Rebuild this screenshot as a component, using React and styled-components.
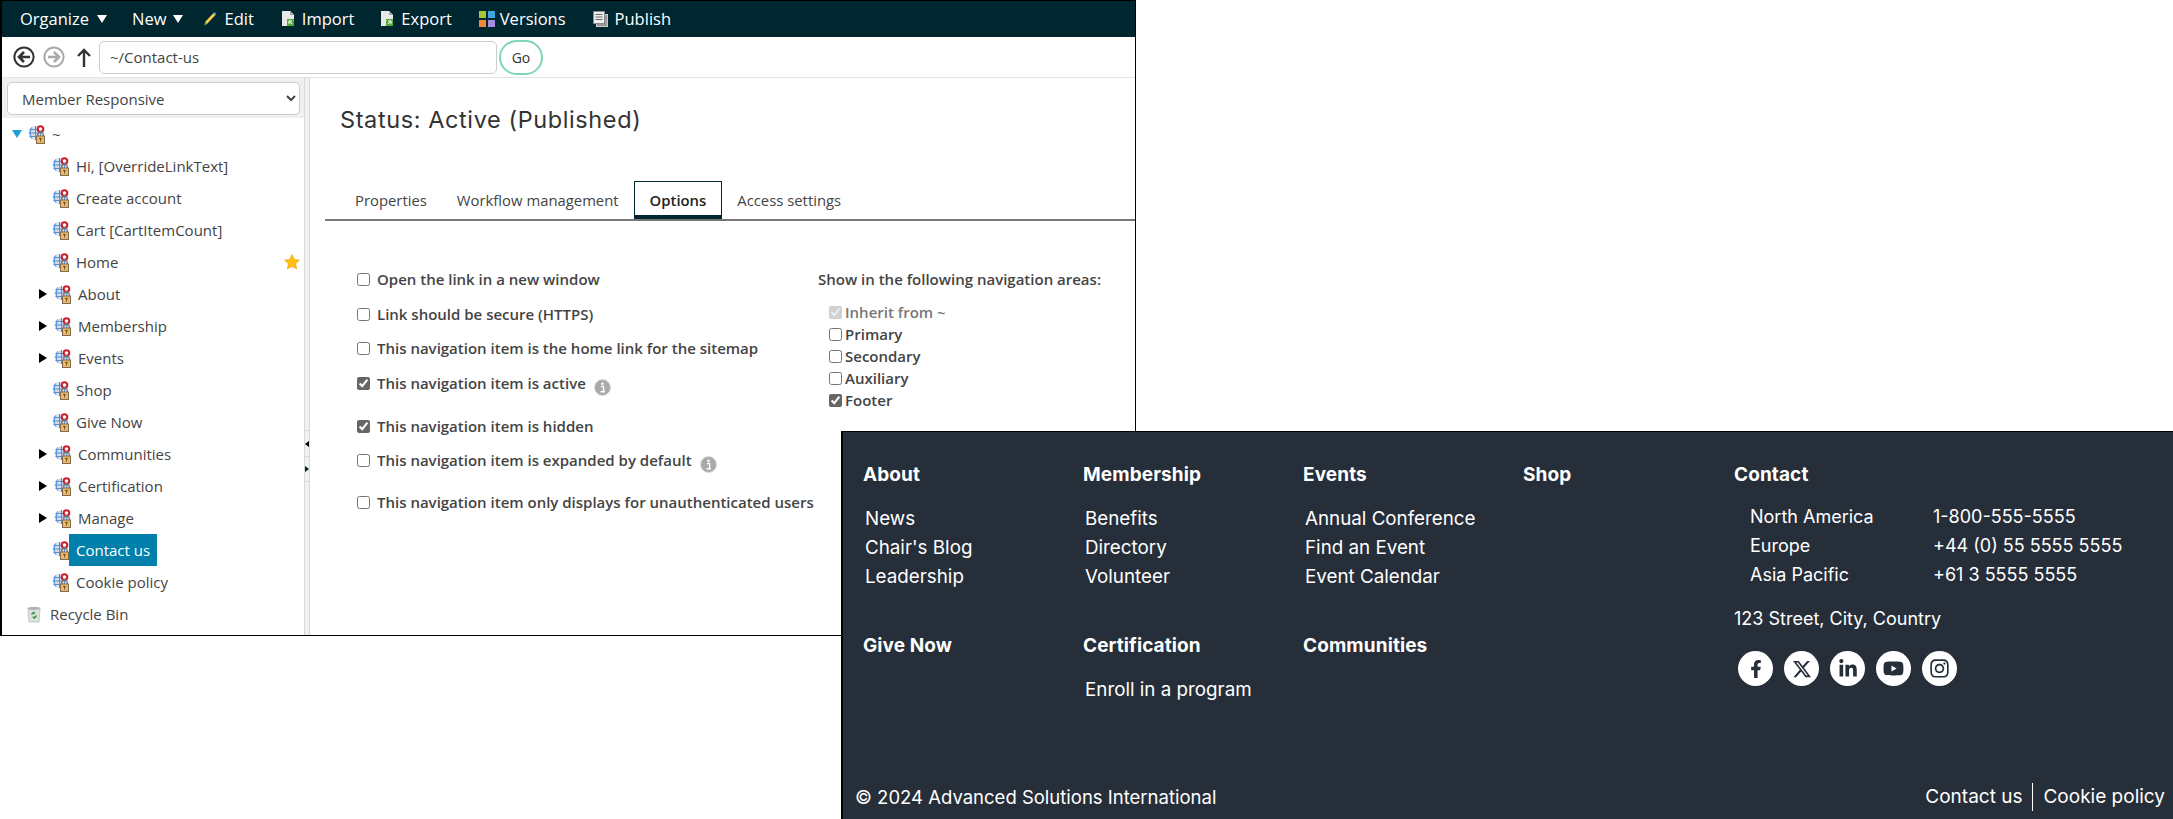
import React from "react";
import styled, { createGlobalStyle } from "styled-components";
import { FaFacebookF, FaLinkedinIn, FaYoutube, FaInstagram } from "react-icons/fa";
import { FaXTwitter } from "react-icons/fa6";

const Global = createGlobalStyle`
  html, body { margin: 0; padding: 0; background: #fff; }
  body { font-family: "Open Sans", "Noto Sans", sans-serif; color: #444; }
  * { box-sizing: border-box; }
`;

const Page = styled.div`
  position: relative;
  width: 2173px;
  height: 819px;
  overflow: hidden;
`;

const Window = styled.div`
  width: 1136px;
  height: 636px;
  border: 1px solid #000;
  border-left-width: 2px;
  display: flex;
  flex-direction: column;
  background: #fff;
`;

const Toolbar = styled.div`
  height: 36px;
  background: #00262f;
  display: flex;
  align-items: center;
  padding: 0 0 1px 18px;
  color: #fff;
  font-size: 16.5px;
  flex: none;
`;

const ToolItem = styled.div`
  display: flex;
  align-items: center;
  gap: ${p => p.$gap ?? 7}px;
  margin-right: ${p => p.$after}px;
  white-space: nowrap;
`;

const Caret = styled.span`
  width: 0;
  height: 0;
  border-left: 5px solid transparent;
  border-right: 5px solid transparent;
  border-top: 8px solid #fff;
`;

const AddressBar = styled.div`
  height: 41px;
  display: flex;
  align-items: center;
  padding-left: 11px;
  border-bottom: 1px solid #e4e4e4;
  flex: none;
`;

const NavButton = styled.svg`
  width: 22px;
  height: 22px;
  margin-right: ${p => p.$after}px;
  flex: none;
`;

const UpButton = styled.svg`
  width: 14px;
  height: 20px;
  margin-right: 8px;
  flex: none;
`;

const AddressInput = styled.div`
  width: 398px;
  height: 33px;
  border: 1px solid #ccc;
  border-radius: 5px;
  display: flex;
  align-items: center;
  padding-left: 10px;
  font-size: 15px;
  color: #444;
`;

const GoButton = styled.div`
  width: 44px;
  height: 35px;
  margin-left: 2px;
  border: 2px solid #7fd6b5;
  border-radius: 18px;
  display: flex;
  align-items: center;
  justify-content: center;
  font-size: 14px;
  color: #333;
`;

const Body = styled.div`
  flex: 1;
  display: flex;
  min-height: 0;
`;

const Sidebar = styled.div`
  width: 302px;
  flex: none;
  display: flex;
  flex-direction: column;
`;

const SelectWrap = styled.div`
  height: 40px;
  background: #f0f0f0;
  padding: 4px 3px 0 5px;
  flex: none;
`;

const Select = styled.select`
  width: 293px;
  height: 33px;
  border: 1px solid #ccc;
  border-radius: 5px;
  background: #fff;
  padding-left: 10px;
  font: 15px "Open Sans", sans-serif;
  color: #444;
`;

const Tree = styled.div`
  flex: 1;
  background: #fff;
`;

const Row = styled.div`
  position: relative;
  height: 32px;
  display: flex;
  align-items: center;
  padding-left: ${p => p.$indent}px;
  font-size: 15px;
  color: #444;
  white-space: nowrap;
`;

const Arrow = styled.span`
  width: 0;
  height: 0;
  border-top: 5px solid transparent;
  border-bottom: 5px solid transparent;
  border-left: 8px solid #000;
  margin-right: 7px;
`;

const RootArrow = styled.span`
  width: 0;
  height: 0;
  border-left: 5px solid transparent;
  border-right: 5px solid transparent;
  border-top: 8px solid #1e9fd8;
  margin-right: 6px;
`;

const RowLabel = styled.span`
  margin-left: ${p => p.$selected ? -1 : p.$gap ?? 6}px;
  ${p => p.$selected && `
    background: #0080aa;
    color: #fff;
    height: 32px;
    line-height: 32px;
    padding: 0 7px;
    position: relative;
  `}
`;

const GlobeSvg = styled.svg`
  flex: none;
  margin-top: 2px;
`;

const BinSvg = styled.svg`
  flex: none;
`;

const Star = styled.svg`
  position: absolute;
  left: 282px;
  top: 8px;
  width: 16px;
  height: 16px;
`;

const Splitter = styled.div`
  width: 6px;
  flex: none;
  background: #f0f0f0;
  border-left: 1px solid #d8d8d8;
  border-right: 1px solid #d8d8d8;
  display: flex;
  flex-direction: column;
  padding-top: 352px;
`;

const SplitCell = styled.div`
  height: 26px;
  border-top: 1px solid #d8d8d8;
  display: flex;
  align-items: center;
  &:last-child { border-bottom: 1px solid #d8d8d8; }
`;

const SplitLeft = styled.span`
  border-top: 3px solid transparent;
  border-bottom: 3px solid transparent;
  border-right: 4px solid #000;
`;

const SplitRight = styled.span`
  border-top: 3px solid transparent;
  border-bottom: 3px solid transparent;
  border-left: 4px solid #00262f;
`;

const Content = styled.div`
  flex: 1;
  min-width: 0;
  padding: 0 0 0 15px;
`;

const Title = styled.h1`
  margin: 27px 0 0 15px;
  height: 30px;
  font: 400 23.5px/30px "Inter", sans-serif;
  letter-spacing: 0.6px;
  color: #333;
`;

const Tabs = styled.div`
  margin-top: 45px;
  height: 41px;
  border-bottom: 2px solid #777;
  display: flex;
  align-items: flex-start;
`;

const Tab = styled.div`
  height: 38px;
  margin-top: 1px;
  padding: 0 15px 1px;
  margin-left: ${p => p.$first ? 15 : 0}px;
  font-size: 14.85px;
  font-weight: ${p => p.$active ? 600 : 400};
  color: ${p => p.$active ? "#222" : "#444"};
  display: flex;
  align-items: center;
  ${p => p.$active && `
    border: 1px solid #00262f;
    border-bottom: 4px solid #00262f;
    padding-top: 3px;
  `}
`;

const Panel = styled.div`
  display: flex;
  padding: 0 0 0 32px;
`;

const LeftOptions = styled.div`
  width: 461px;
  flex: none;
  padding-top: 48px;
`;

const OptionRow = styled.label`
  display: flex;
  align-items: center;
  height: 20px;
  margin-bottom: ${p => p.$after}px;
  font-size: 15px;
  font-weight: 600;
  color: #444;
  white-space: nowrap;
`;

const Check = styled.input`
  width: 13px;
  height: 13px;
  margin: 0 7px 0 0;
  accent-color: #666;
  flex: none;
`;

const InfoIcon = styled.svg`
  width: 17px;
  height: 17px;
  margin: 8px 0 0 8px;
`;

const RightOptions = styled.div`
  padding-top: 48px;
`;

const AreasHeading = styled.div`
  height: 20px;
  line-height: 20px;
  font-size: 15px;
  font-weight: 600;
  color: #444;
  margin-bottom: 12px;
  white-space: nowrap;
`;

const AreaRow = styled.label`
  display: flex;
  align-items: center;
  height: 22px;
  padding-left: 11px;
  font-size: 15px;
  font-weight: 600;
  color: ${p => p.$muted ? "#777" : "#444"};
`;

const AreaCheck = styled(Check)`
  margin-right: 3px;
`;

const Footer = styled.footer`
  position: absolute;
  left: 841px;
  top: 431px;
  right: 0;
  bottom: 0;
  background: #262e39;
  border-left: 2px solid #000;
  border-top: 1px solid #000;
  color: #fff;
  font-family: "Inter", sans-serif;
  display: flex;
  flex-direction: column;
`;

const FooterMain = styled.div`
  flex: 1;
  min-height: 0;
  display: flex;
  padding: 28px 0 0 20px;
`;

const NavGrid = styled.div`
  display: grid;
  grid-template-columns: repeat(3, 220px) 211px;
  grid-template-rows: 171px auto;
  width: 871px;
  flex: none;
`;

const Heading = styled.div`
  font-size: 19px;
  font-weight: 700;
  line-height: 30px;
  letter-spacing: 0.1px;
`;

const FooterLinks = styled.div`
  margin-top: 14px;
  padding-left: 2px;
`;

const FooterLink = styled.div`
  font-size: 18.8px;
  line-height: 29px;
  font-weight: 400;
  white-space: nowrap;
`;

const ContactTable = styled.div`
  margin-top: 12px;
  padding-left: 16px;
  display: grid;
  grid-template-columns: 183px auto;
  font-size: 18px;
  line-height: 29px;
  white-space: nowrap;
`;

const Address = styled.div`
  margin-top: 15px;
  font-size: 18px;
  line-height: 29px;
`;

const Socials = styled.div`
  display: flex;
  gap: 11px;
  margin: 18px 0 0 4px;
`;

const Social = styled.div`
  width: 35px;
  height: 35px;
  border-radius: 50%;
  background: #fff;
  color: #262e39;
  display: flex;
  align-items: center;
  justify-content: center;
  font-size: ${p => p.$size ?? 18}px;
`;

const BottomBar = styled.div`
  height: 36px;
  flex: none;
  display: flex;
  align-items: flex-start;
  justify-content: space-between;
  padding: 0 8px 0 12px;
  font-size: 18.5px;
  line-height: 28px;
`;

const LegalLinks = styled.div`
  display: flex;
  align-items: center;
  font-size: 19px;
`;

const LegalLink = styled.span`
  padding: ${p => p.$last ? "0 0 0 10px" : "0 10px 0 0"};
  ${p => !p.$last && "border-right: 1px solid #fff;"}
`;

const GlobeLock = () => (
  <GlobeSvg width="18" height="20" viewBox="0 0 18 20">
    <circle cx="7.5" cy="8" r="7" fill="#d8dde6" />
    <path d="M.8 8h13.400M1.500 4.500h12M1.500 11.500h12M7.500 1v14M3.600 2.400c-1.800 3.500-1.800 7.700 0 11.200M11.400 2.400c1.800 3.500 1.800 7.700 0 11.200" stroke="#4f8fe0" strokeWidth="1" fill="none" />
    <circle cx="12.5" cy="4" r="2.800" fill="#fff" stroke="#cc1f2a" strokeWidth="2" />
    <path d="M9.800 11V9.300a2.700 2.700 0 0 1 5.400 0V11" fill="none" stroke="#777" strokeWidth="1.400" />
    <rect x="8.500" y="11" width="8" height="7.500" fill="#eeb765" stroke="#7b6a4d" strokeWidth="1" />
    <path d="M11 13.500h3M12.500 13.500v3" stroke="#6a5230" strokeWidth="1" />
  </GlobeSvg>
);

const Bin = () => (
  <BinSvg width="14" height="17" viewBox="0 0 14 17">
    <path d="M1 2h12l-1 14H2z" fill="#dfe3e0" stroke="#c3c8c4" />
    <ellipse cx="7" cy="2.400" rx="6" ry="1.600" fill="#aeb4af" />
    <path d="M4.500 8.500l2-2 1.500 1M9.500 9.500l-2 2.500-1.800-1.200" fill="none" stroke="#2a9a3e" strokeWidth="1.600" />
  </BinSvg>
);

const tree = [
  { label: "Hi, [OverrideLinkText]" },
  { label: "Create account" },
  { label: "Cart [CartItemCount]" },
  { label: "Home", star: true },
  { label: "About", arrow: true },
  { label: "Membership", arrow: true },
  { label: "Events", arrow: true },
  { label: "Shop" },
  { label: "Give Now" },
  { label: "Communities", arrow: true },
  { label: "Certification", arrow: true },
  { label: "Manage", arrow: true },
  { label: "Contact us", selected: true },
  { label: "Cookie policy" },
];

const options = [
  { label: "Open the link in a new window", after: 15 },
  { label: "Link should be secure (HTTPS)", after: 14 },
  { label: "This navigation item is the home link for the sitemap", after: 15 },
  { label: "This navigation item is active", checked: true, info: true, after: 23 },
  { label: "This navigation item is hidden", checked: true, after: 14 },
  { label: "This navigation item is expanded by default", info: true, after: 22 },
  { label: "This navigation item only displays for unauthenticated users", after: 0 },
];

const areas = [
  { label: "Inherit from ~", checked: true, disabled: true },
  { label: "Primary" },
  { label: "Secondary" },
  { label: "Auxiliary" },
  { label: "Footer", checked: true },
];

const columns = [
  { title: "About", links: ["News", "Chair's Blog", "Leadership"] },
  { title: "Membership", links: ["Benefits", "Directory", "Volunteer"] },
  { title: "Events", links: ["Annual Conference", "Find an Event", "Event Calendar"] },
  { title: "Shop", links: [] },
  { title: "Give Now", links: [] },
  { title: "Certification", links: ["Enroll in a program"] },
  { title: "Communities", links: [] },
];

const Info = () => (
  <InfoIcon viewBox="0 0 17 17">
    <circle cx="8.5" cy="8.5" r="8" fill="#a9a9a9" stroke="#ddd" />
    <circle cx="8.5" cy="4.800" r="1.300" fill="#fff" />
    <path d="M7 7.500h2.600v5H11M6.500 12.700h4.500" stroke="#fff" strokeWidth="1.400" fill="none" />
  </InfoIcon>
);

const NavCircle = ({ dir, color, after }) => (
  <NavButton viewBox="0 0 22 22" $after={after}>
    <circle cx="11" cy="11" r="9.600" fill="#fff" stroke={color} strokeWidth="2" />
    <path
      d={dir === "left" ? "M17 11H7M11 6l-5 5 5 5" : "M5 11h10M11 6l5 5-5 5"}
      stroke={color}
      strokeWidth="2.600"
      fill="none"
    />
  </NavButton>
);

export default function App() {
  return (
    <Page>
      <Global />
      <Window>
        <Toolbar>
          <ToolItem $after={25} $gap={8}>Organize <Caret /></ToolItem>
          <ToolItem $after={21} $gap={7}>New <Caret /></ToolItem>
          <ToolItem $after={27}>
            <svg width="13" height="15" viewBox="0 0 13 15">
              <path d="M1 11L9.500 2l2 2L3 13z" fill="#f2c94c" />
              <path d="M9.500 2l1-1 2 2-1 1z" fill="#4aa3df" />
              <path d="M1 11l2 2-2.500 1.500z" fill="#7ac143" />
            </svg>
            Edit
          </ToolItem>
          <ToolItem $after={26}>
            <svg width="14" height="17" viewBox="0 0 14 17">
              <path d="M1 1h8l4 4v11H1z" fill="#e8e8e8" />
              <path d="M9 1v4h4" fill="#aaa" />
              <rect x="6" y="9" width="7" height="7" fill="#58a942" />
              <path d="M8 11l3 3M8 14v-3h3" stroke="#fff" fill="none" />
            </svg>
            Import
          </ToolItem>
          <ToolItem $after={27}>
            <svg width="14" height="17" viewBox="0 0 14 17">
              <path d="M1 1h8l4 4v11H1z" fill="#e8e8e8" />
              <path d="M9 1v4h4" fill="#aaa" />
              <rect x="6" y="9" width="7" height="7" fill="#58a942" />
              <path d="M11 11l-3 3M8 11h3v3" stroke="#fff" fill="none" />
            </svg>
            Export
          </ToolItem>
          <ToolItem $after={27} $gap={5}>
            <svg width="16" height="16" viewBox="0 0 16 16">
              <rect x="0" y="0" width="7" height="7" fill="#a8c63c" />
              <rect x="9" y="0" width="7" height="7" fill="#3ea6e0" />
              <rect x="0" y="9" width="7" height="7" fill="#f0863c" />
              <rect x="9" y="9" width="7" height="7" fill="#a98be0" />
            </svg>
            Versions
          </ToolItem>
          <ToolItem $gap={7}>
            <svg width="15" height="16" viewBox="0 0 15 16">
              <rect x="3.500" y="3.500" width="11" height="12" fill="#999" stroke="#ccc" />
              <rect x="0.500" y="0.500" width="11" height="12" fill="#eee" stroke="#888" />
              <path d="M2.500 3.500h7M2.500 6h7M2.500 8.500h7" stroke="#666" />
            </svg>
            Publish
          </ToolItem>
        </Toolbar>
        <AddressBar>
          <NavCircle dir="left" color="#333" after={8} />
          <NavCircle dir="right" color="#aaa" after={12} />
          <UpButton viewBox="0 0 14 20">
            <path d="M7 20V3M1 9l6-6 6 6" stroke="#333" strokeWidth="2.400" fill="none" />
          </UpButton>
          <AddressInput>~/Contact-us</AddressInput>
          <GoButton>Go</GoButton>
        </AddressBar>
        <Body>
          <Sidebar>
            <SelectWrap>
              <Select defaultValue="Member Responsive">
                <option>Member Responsive</option>
              </Select>
            </SelectWrap>
            <Tree>
              <Row $indent={10}>
                <RootArrow />
                <GlobeLock />
                <RowLabel>~</RowLabel>
              </Row>
              {tree.map(item => (
                <Row key={item.label} $indent={item.arrow ? 37 : 50}>
                  {item.arrow && <Arrow />}
                  <GlobeLock />
                  <RowLabel $selected={item.selected}>{item.label}</RowLabel>
                  {item.star && (
                    <Star viewBox="0 0 24 24">
                      <path d="M12 1l3.400 7.200 7.600 1-5.600 5.300 1.500 7.800L12 18.400 5.100 22.300l1.500-7.800L1 9.200l7.600-1z" fill="#ffc20e" stroke="#f09a00" />
                    </Star>
                  )}
                </Row>
              ))}
              <Row $indent={25}>
                <Bin />
                <RowLabel $gap={9}>Recycle Bin</RowLabel>
              </Row>
            </Tree>
          </Sidebar>
          <Splitter>
            <SplitCell><SplitLeft /></SplitCell>
            <SplitCell><SplitRight /></SplitCell>
          </Splitter>
          <Content>
            <Title>Status: Active (Published)</Title>
            <Tabs>
              <Tab $first>Properties</Tab>
              <Tab>Workflow management</Tab>
              <Tab $active>Options</Tab>
              <Tab>Access settings</Tab>
            </Tabs>
            <Panel>
              <LeftOptions>
                {options.map(o => (
                  <OptionRow key={o.label} $after={o.after}>
                    <Check type="checkbox" defaultChecked={o.checked} />
                    {o.label}
                    {o.info && <Info />}
                  </OptionRow>
                ))}
              </LeftOptions>
              <RightOptions>
                <AreasHeading>Show in the following navigation areas:</AreasHeading>
                {areas.map(a => (
                  <AreaRow key={a.label} $muted={a.disabled}>
                    <AreaCheck type="checkbox" defaultChecked={a.checked} disabled={a.disabled} />
                    {a.label}
                  </AreaRow>
                ))}
              </RightOptions>
            </Panel>
          </Content>
        </Body>
      </Window>
      <Footer>
        <FooterMain>
          <NavGrid>
            {columns.map(c => (
              <div key={c.title}>
                <Heading>{c.title}</Heading>
                <FooterLinks>
                  {c.links.map(l => <FooterLink key={l}>{l}</FooterLink>)}
                </FooterLinks>
              </div>
            ))}
          </NavGrid>
          <div>
            <Heading>Contact</Heading>
            <ContactTable>
              <span>North America</span><span>1-800-555-5555</span>
              <span>Europe</span><span>+44 (0) 55 5555 5555</span>
              <span>Asia Pacific</span><span>+61 3 5555 5555</span>
            </ContactTable>
            <Address>123 Street, City, Country</Address>
            <Socials>
              <Social><FaFacebookF /></Social>
              <Social $size={20}><FaXTwitter /></Social>
              <Social $size={20}><FaLinkedinIn /></Social>
              <Social $size={21}><FaYoutube /></Social>
              <Social $size={21}><FaInstagram /></Social>
            </Socials>
          </div>
        </FooterMain>
        <BottomBar>
          <span>© 2024 Advanced Solutions International</span>
          <LegalLinks>
            <LegalLink>Contact us</LegalLink>
            <LegalLink $last>Cookie policy</LegalLink>
          </LegalLinks>
        </BottomBar>
      </Footer>
    </Page>
  );
}
